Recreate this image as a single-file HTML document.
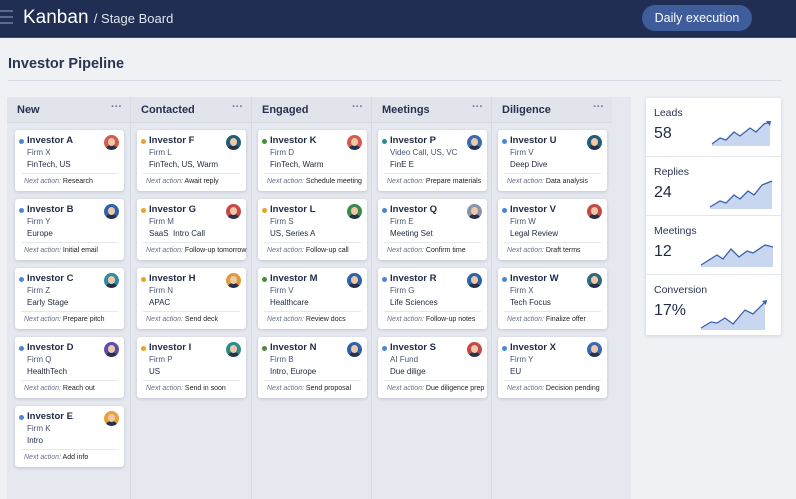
<!DOCTYPE html>
<html><head><meta charset="utf-8"><style>
*{margin:0;padding:0;box-sizing:border-box}
body{width:796px;height:499px;overflow:hidden;background:#eff1f5;font-family:"Liberation Sans",sans-serif;color:#1f2a44;position:relative}
.top{position:absolute;left:0;top:0;width:796px;height:38px;background:#1f2e52;border-bottom:1px solid #3b4a6e}
.ham{position:absolute;left:0;top:10px;width:13px}
.ham i{display:block;height:2px;background:#5c6a8c;margin-bottom:4px}
.title{position:absolute;left:23px;top:7px;color:#fff;font-size:19px}
.title span{font-size:13px;color:#dfe4ee}
.btn{position:absolute;left:642px;top:5px;width:110px;height:26px;border-radius:13px;background:#3f5d9a;color:#fff;font-size:12.5px;text-align:center;line-height:26px}
h1{position:absolute;left:8px;top:56px;font-size:14.5px;font-weight:bold;color:#2a3550}
.rule{position:absolute;left:8px;top:80px;width:774px;height:1px;background:#d8dce4}
.board{position:absolute;left:7px;top:97px;width:624px;height:402px;background:#e5e8ee}
.col{position:absolute;top:97px;height:402px;border-right:1px solid #d8dbe2}
.ch{position:absolute;left:0;top:0;right:0;height:26px;background:#e1e4ea;border-bottom:1px solid #d5d9e0;font-size:11px;font-weight:bold;padding:7px 0 0 10px;color:#263150}
.ch b{position:absolute;right:8px;top:4px;font-size:11px;color:#6b7490;letter-spacing:0}
.card{position:absolute;width:109px;height:61px;background:#fff;border-radius:3px;box-shadow:0 1px 3px rgba(30,40,70,.18)}
.card .n{position:absolute;left:12px;top:5px;font-size:9.5px;font-weight:bold;color:#1f2a44}
.card .d{position:absolute;left:4px;top:9px;width:5px;height:5px;border-radius:50%}
.card .f{position:absolute;left:12px;top:18px;font-size:8px;color:#4a5470}
.card .t{position:absolute;left:12px;top:30px;font-size:8px;color:#222b40;white-space:nowrap}
.card .l{position:absolute;left:6px;right:6px;top:43px;height:1px;background:#e4e7ec}
.card .a{position:absolute;left:9px;top:48px;font-size:7px;color:#222;white-space:nowrap}
.card .a i{color:#6a7288}
.av{position:absolute;right:5px;top:5px;width:15px;height:15px;border-radius:50%;overflow:hidden}
.av::after{content:"";position:absolute;left:4px;top:3px;width:7px;height:8px;border-radius:50%;background:#f0c8a8}
.av::before{content:"";position:absolute;left:2px;top:10px;width:11px;height:8px;border-radius:50%;background:#25324f}
.stats{position:absolute;left:646px;top:98px;width:135px;height:237px;background:#fff;box-shadow:0 1px 4px rgba(30,40,70,.15);border-radius:2px}
.st{position:absolute;left:0;width:135px;height:59px;border-bottom:1px solid #e3e6ec}
.st .k{position:absolute;left:8px;top:9px;font-size:10.5px;color:#2a3550}
.st .v{position:absolute;left:8px;top:27px;font-size:16px;color:#1f2a44}
.st svg{position:absolute;left:60px;top:22px}
</style></head><body>
<div class="top"><div class="ham"><i></i><i></i><i></i></div>
<div class="title">Kanban <span>/ Stage Board</span></div>
<div class="btn">Daily execution</div></div>
<h1>Investor Pipeline</h1><div class="rule"></div>
<div class="board"></div>
<div class="col" style="left:7px;width:124px"><div class="ch">New<b>···</b></div></div>
<div class="col" style="left:131px;width:121px"><div class="ch">Contacted<b>···</b></div></div>
<div class="col" style="left:252px;width:120px"><div class="ch">Engaged<b>···</b></div></div>
<div class="col" style="left:372px;width:120px"><div class="ch">Meetings<b>···</b></div></div>
<div class="col" style="left:492px;width:139px;border-right:none"><div class="ch" style="right:19px">Diligence<b>···</b></div></div>

<!-- New -->
<div class="card" style="left:15px;top:130px"><i class="d" style="background:#4a86d8"></i><div class="n">Investor A</div><div class="f">Firm X</div><div class="t">FinTech, US</div><div class="l"></div><div class="a"><i>Next action:</i> Research</div><div class="av" style="background:#d85a4e"></div></div>
<div class="card" style="left:15px;top:199px"><i class="d" style="background:#4a86d8"></i><div class="n">Investor B</div><div class="f">Firm Y</div><div class="t">Europe</div><div class="l"></div><div class="a"><i>Next action:</i> Initial email</div><div class="av" style="background:#2f63a8"></div></div>
<div class="card" style="left:15px;top:268px"><i class="d" style="background:#4a86d8"></i><div class="n">Investor C</div><div class="f">Firm Z</div><div class="t">Early Stage</div><div class="l"></div><div class="a"><i>Next action:</i> Prepare pitch</div><div class="av" style="background:#2f8aa8"></div></div>
<div class="card" style="left:15px;top:337px"><i class="d" style="background:#4a86d8"></i><div class="n">Investor D</div><div class="f">Firm Q</div><div class="t">HealthTech</div><div class="l"></div><div class="a"><i>Next action:</i> Reach out</div><div class="av" style="background:#5a4fa8"></div></div>
<div class="card" style="left:15px;top:406px"><i class="d" style="background:#4a86d8"></i><div class="n">Investor E</div><div class="f">Firm K</div><div class="t">Intro</div><div class="l"></div><div class="a"><i>Next action:</i> Add info</div><div class="av" style="background:#e8a23a"></div></div>
<!-- Contacted -->
<div class="card" style="left:137px;top:130px"><i class="d" style="background:#e8a523"></i><div class="n">Investor F</div><div class="f">Firm L</div><div class="t">FinTech, US, Warm</div><div class="l"></div><div class="a"><i>Next action:</i> Await reply</div><div class="av" style="background:#1f5f7a"></div></div>
<div class="card" style="left:137px;top:199px"><i class="d" style="background:#e8a523"></i><div class="n">Investor G</div><div class="f">Firm M</div><div class="t">SaaS &nbsp;Intro Call</div><div class="l"></div><div class="a"><i>Next action:</i> Follow-up tomorrow</div><div class="av" style="background:#c84848"></div></div>
<div class="card" style="left:137px;top:268px"><i class="d" style="background:#e8a523"></i><div class="n">Investor H</div><div class="f">Firm N</div><div class="t">APAC</div><div class="l"></div><div class="a"><i>Next action:</i> Send deck</div><div class="av" style="background:#e09a3a"></div></div>
<div class="card" style="left:137px;top:337px"><i class="d" style="background:#e8a523"></i><div class="n">Investor I</div><div class="f">Firm P</div><div class="t">US</div><div class="l"></div><div class="a"><i>Next action:</i> Send in soon</div><div class="av" style="background:#2f8a8a"></div></div>
<!-- Engaged -->
<div class="card" style="left:258px;top:130px"><i class="d" style="background:#4a8a3a"></i><div class="n">Investor K</div><div class="f">Firm D</div><div class="t">FinTech, Warm</div><div class="l"></div><div class="a"><i>Next action:</i> Schedule meeting</div><div class="av" style="background:#d85a4e"></div></div>
<div class="card" style="left:258px;top:199px"><i class="d" style="background:#e8a523"></i><div class="n">Investor L</div><div class="f">Firm S</div><div class="t">US, Series A</div><div class="l"></div><div class="a"><i>Next action:</i> Follow-up call</div><div class="av" style="background:#3a8a4a"></div></div>
<div class="card" style="left:258px;top:268px"><i class="d" style="background:#4a8a3a"></i><div class="n">Investor M</div><div class="f">Firm V</div><div class="t">Healthcare</div><div class="l"></div><div class="a"><i>Next action:</i> Review docs</div><div class="av" style="background:#2f63a8"></div></div>
<div class="card" style="left:258px;top:337px"><i class="d" style="background:#4a8a3a"></i><div class="n">Investor N</div><div class="f">Firm B</div><div class="t">Intro, Europe</div><div class="l"></div><div class="a"><i>Next action:</i> Send proposal</div><div class="av" style="background:#2f63a8"></div></div>
<!-- Meetings -->
<div class="card" style="left:378px;top:130px"><i class="d" style="background:#2a8a9a"></i><div class="n">Investor P</div><div class="f">Video Call, US, VC</div><div class="t">FinE E</div><div class="l"></div><div class="a"><i>Next action:</i> Prepare materials</div><div class="av" style="background:#3a6ab0"></div></div>
<div class="card" style="left:378px;top:199px"><i class="d" style="background:#4a86d8"></i><div class="n">Investor Q</div><div class="f">Firm E</div><div class="t">Meeting Set</div><div class="l"></div><div class="a"><i>Next action:</i> Confirm time</div><div class="av" style="background:#8a96a8"></div></div>
<div class="card" style="left:378px;top:268px"><i class="d" style="background:#4a86d8"></i><div class="n">Investor R</div><div class="f">Firm G</div><div class="t">Life Sciences</div><div class="l"></div><div class="a"><i>Next action:</i> Follow-up notes</div><div class="av" style="background:#2f63a8"></div></div>
<div class="card" style="left:378px;top:337px"><i class="d" style="background:#4a86d8"></i><div class="n">Investor S</div><div class="f">AI Fund</div><div class="t">Due dilige</div><div class="l"></div><div class="a"><i>Next action:</i> Due diligence prep</div><div class="av" style="background:#c84848"></div></div>
<!-- Diligence -->
<div class="card" style="left:498px;top:130px"><i class="d" style="background:#4a86d8"></i><div class="n">Investor U</div><div class="f">Firm V</div><div class="t">Deep Dive</div><div class="l"></div><div class="a"><i>Next action:</i> Data analysis</div><div class="av" style="background:#1f5f7a"></div></div>
<div class="card" style="left:498px;top:199px"><i class="d" style="background:#4a86d8"></i><div class="n">Investor V</div><div class="f">Firm W</div><div class="t">Legal Review</div><div class="l"></div><div class="a"><i>Next action:</i> Draft terms</div><div class="av" style="background:#c84848"></div></div>
<div class="card" style="left:498px;top:268px"><i class="d" style="background:#4a86d8"></i><div class="n">Investor W</div><div class="f">Firm X</div><div class="t">Tech Focus</div><div class="l"></div><div class="a"><i>Next action:</i> Finalize offer</div><div class="av" style="background:#2f6a7a"></div></div>
<div class="card" style="left:498px;top:337px"><i class="d" style="background:#4a86d8"></i><div class="n">Investor X</div><div class="f">Firm Y</div><div class="t">EU</div><div class="l"></div><div class="a"><i>Next action:</i> Decision pending</div><div class="av" style="background:#3a6ab0"></div></div>

<div class="stats">
<div class="st" style="top:0"><div class="k">Leads</div><div class="v">58</div>
<svg width="70" height="26"><path d="M6 24 L14 18 L20 20 L28 12 L34 16 L44 8 L50 12 L58 4 L64 2 L64 26 L6 26Z" fill="#c9d6ef"/><path d="M6 24 L14 18 L20 20 L28 12 L34 16 L44 8 L50 12 L58 4 L64 2" fill="none" stroke="#3a62ad" stroke-width="1.3"/><path d="M60 1 L65 1 L64 6Z" fill="#3a62ad"/></svg></div>
<div class="st" style="top:59px"><div class="k">Replies</div><div class="v">24</div>
<svg width="70" height="30" style="top:22px"><path d="M4 28 L14 22 L20 24 L28 16 L34 20 L42 12 L48 16 L56 6 L66 2 L66 30 L4 30Z" fill="#c9d6ef"/><path d="M4 28 L14 22 L20 24 L28 16 L34 20 L42 12 L48 16 L56 6 L66 2" fill="none" stroke="#3a62ad" stroke-width="1.3"/></svg></div>
<div class="st" style="top:118px"><div class="k">Meetings</div><div class="v">12</div>
<svg width="75" height="26" style="left:53px;top:25px"><path d="M2 24 L18 14 L24 18 L32 8 L40 16 L48 10 L54 12 L66 4 L74 6 L74 26 L2 26Z" fill="#c9d6ef"/><path d="M2 24 L18 14 L24 18 L32 8 L40 16 L48 10 L54 12 L66 4 L74 6" fill="none" stroke="#3a62ad" stroke-width="1.3"/></svg></div>
<div class="st" style="top:177px;border:none"><div class="k">Conversion</div><div class="v">17%</div>
<svg width="75" height="34" style="left:53px;top:21px"><path d="M2 32 L12 26 L18 27 L26 22 L34 28 L46 14 L54 18 L66 6 L66 34 L2 34Z" fill="#c9d6ef"/><path d="M2 32 L12 26 L18 27 L26 22 L34 28 L46 14 L54 18 L66 6" fill="none" stroke="#3a62ad" stroke-width="1.3"/><path d="M63 5 L68 4 L67 9Z" fill="#3a62ad"/></svg></div>
</div>
</body></html>
